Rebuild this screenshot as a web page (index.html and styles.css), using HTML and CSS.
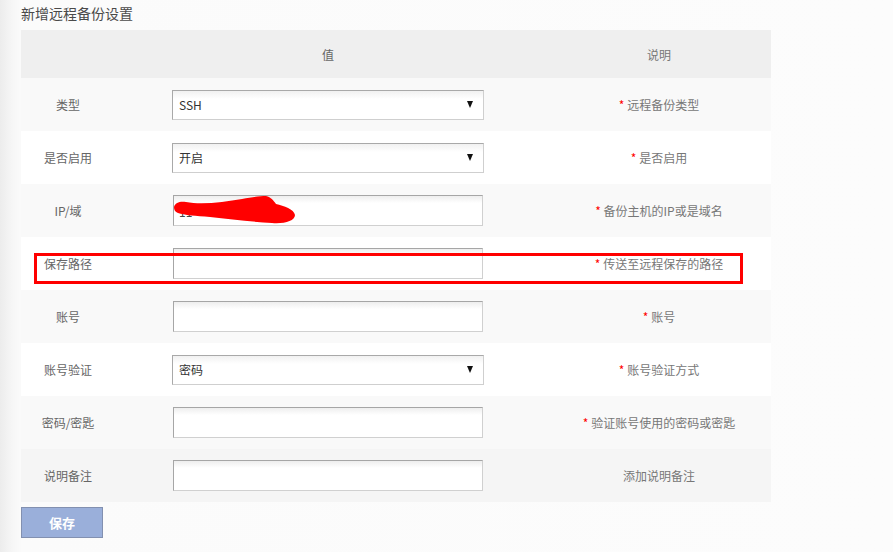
FILE: index.html
```html
<!DOCTYPE html>
<html lang="zh">
<head>
<meta charset="utf-8">
<link rel="stylesheet" href="styles.css">
</head>
<body>
<div class="page">
  <div class="title">新增远程备份设置</div>
  <div class="table">
    <div class="row head">
      <div class="c1"></div>
      <div class="c2">值</div>
      <div class="c3">说明</div>
    </div>
    <div class="row odd">
      <div class="c1">类型</div>
      <div class="c2"><div class="sel"><span>SSH</span><span class="arr"></span></div></div>
      <div class="c3"><i>*</i> 远程备份类型</div>
    </div>
    <div class="row">
      <div class="c1">是否启用</div>
      <div class="c2"><div class="sel"><span>开启</span><span class="arr"></span></div></div>
      <div class="c3"><i>*</i> 是否启用</div>
    </div>
    <div class="row odd">
      <div class="c1">IP/域</div>
      <div class="c2"><div class="inp ip"><span class="iptext">11</span>
        <svg class="scribble" width="124" height="30" viewBox="0 0 124 30"><path d="M0 11 C1 6 7 5 12 6 C28 9 50 6 68 3 C78 1 86 0 92 0 C97 1 100 5 102 8 C110 10 120 13 121 19 C121 25 110 28 98 27 C78 26 56 23 36 21 C22 20 10 19 4 17 C1 16 0 14 0 11 Z" fill="#ff0000"/></svg>
      </div></div>
      <div class="c3"><i>*</i> 备份主机的IP或是域名</div>
    </div>
    <div class="row">
      <div class="c1">保存路径</div>
      <div class="c2"><div class="inp"></div></div>
      <div class="c3"><i>*</i> 传送至远程保存的路径</div>
    </div>
    <div class="row odd">
      <div class="c1">账号</div>
      <div class="c2"><div class="inp"></div></div>
      <div class="c3"><i>*</i> 账号</div>
    </div>
    <div class="row">
      <div class="c1">账号验证</div>
      <div class="c2"><div class="sel"><span>密码</span><span class="arr"></span></div></div>
      <div class="c3"><i>*</i> 账号验证方式</div>
    </div>
    <div class="row odd">
      <div class="c1">密码/密匙</div>
      <div class="c2"><div class="inp"></div></div>
      <div class="c3"><i>*</i> 验证账号使用的密码或密匙</div>
    </div>
    <div class="row last">
      <div class="c1">说明备注</div>
      <div class="c2"><div class="inp"></div></div>
      <div class="c3">添加说明备注</div>
    </div>
  </div>
  <div class="btn">保存</div>
  <div class="mark"></div>
</div>
</body>
</html>
```

FILE: styles.css
```css
html, body { margin: 0; padding: 0; }
body {
  width: 893px; height: 552px; overflow: hidden;
  background: linear-gradient(to right, #ececec 0px, #f6f6f6 12px, #fbfbfb 22px, #fcfcfc 100%);
  font-family: "Noto Sans CJK SC", "Liberation Sans", sans-serif;
  font-size: 12px; color: #666;
}
.page { position: relative; padding: 0 0 0 21px; }
.title {
  height: 30px; line-height: 26px; font-size: 14px; color: #4a4a4a;
}
.table { width: 750px; }
.row {
  display: grid; grid-template-columns: 94px 426px 230px;
  height: 53px; align-items: center; background: #ffffff;
}
.row.odd { background: #f9f9f9; }
.row.last { background: #f5f5f5; }
.row.head { height: 48px; background: #efefef; }
.c1, .c3 { text-align: center; }
.c2 { display: flex; justify-content: center; }
.c3 { color: #777; padding-left: 6px; }
.c3 i { color: #ff0000; font-style: normal; }
.sel {
  box-sizing: border-box; width: 312px; height: 30px;
  border: 1px solid #a9a9a9; border-bottom-color: #cfcfcf; border-right-color: #cfcfcf;
  background: linear-gradient(#f1f1f1, #ffffff 8px);
  display: flex; align-items: center; justify-content: space-between;
  padding: 0 10px 0 6px; color: #333; font-size: 12px;
}
.sel .arr {
  width: 0; height: 0;
  border-left: 3.5px solid transparent; border-right: 3.5px solid transparent;
  border-top: 7px solid #111;
}
.inp {
  box-sizing: border-box; width: 310px; height: 31px;
  border: 1px solid #a6a6a6; border-bottom-color: #d0d0d0; border-right-color: #d0d0d0;
  background: linear-gradient(#eeeeee, #ffffff 7px);
  position: relative;
}
.iptext { position: absolute; left: 5px; top: 7px; color: #444; }
.scribble { position: absolute; left: 0px; top: 0px; }
.btn {
  box-sizing: border-box; width: 82px; height: 31px; margin-top: 5px;
  background: #9aafda; border: 1px solid #8290b0;
  color: #ffffff; font-weight: bold; font-size: 13px;
  display: flex; align-items: center; justify-content: center;
}
.mark {
  position: absolute; left: 34px; top: 253px; width: 709px; height: 31px;
  box-sizing: border-box; border: 3px solid #ff0000;
}
```
